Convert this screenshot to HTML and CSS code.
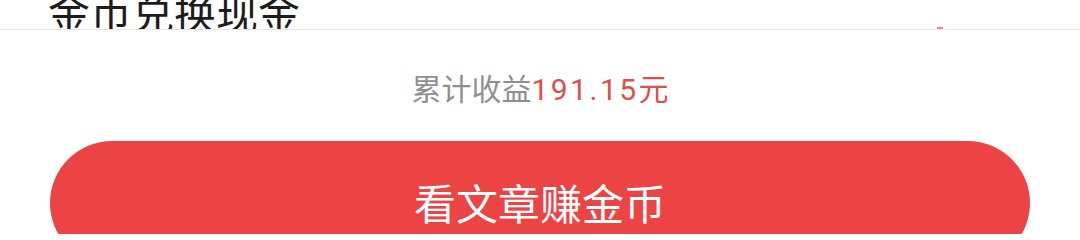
FILE: index.html
```html
<!DOCTYPE html>
<html lang="zh-CN">
<head>
<meta charset="utf-8">
<link rel="stylesheet" href="styles.css">
</head>
<body>
<div class="header">
  <div class="title">金币兑换现金</div>
  <span class="mark"></span>
</div>
<div class="income"><span class="label">累计收益</span><span class="amount">191.15</span><span class="unit">元</span></div>
<div class="btn">看文章赚金币</div>
</body>
</html>
```
FILE: styles.css
```css
html, body {
  margin: 0;
  padding: 0;
  background: #ffffff;
}
body {
  width: 1080px;
  height: 234px;
  overflow: hidden;
  font-family: "Noto Sans CJK SC", "Noto Sans", sans-serif;
}
.header {
  height: 29px;
  border-bottom: 1px solid #e6e6e6;
  overflow: hidden;
  display: flex;
  justify-content: space-between;
  align-items: flex-start;
  padding-left: 48px;
  padding-right: 137px;
}
.title {
  margin-top: -10px;
  font-size: 42px;
  line-height: 42px;
  color: #1c1c1c;
}
.mark {
  align-self: flex-end;
  width: 6px;
  height: 2px;
  background: #e98a88;
}
.income {
  padding-top: 37px;
  height: 40px;
  text-align: center;
  font-size: 30px;
  line-height: 40px;
}
.label {
  color: #8f8f8f;
}
.amount {
  color: #d9504c;
  letter-spacing: 2.5px;
  font-family: "Roboto", "Noto Sans", sans-serif;
}
.unit {
  color: #d9504c;
}
.btn {
  margin: 34px 50px 0;
  height: 124px;
  border-radius: 62px;
  background: #ec4444;
  color: #ffffff;
  font-size: 42px;
  line-height: 122px;
  text-align: center;
}
```
